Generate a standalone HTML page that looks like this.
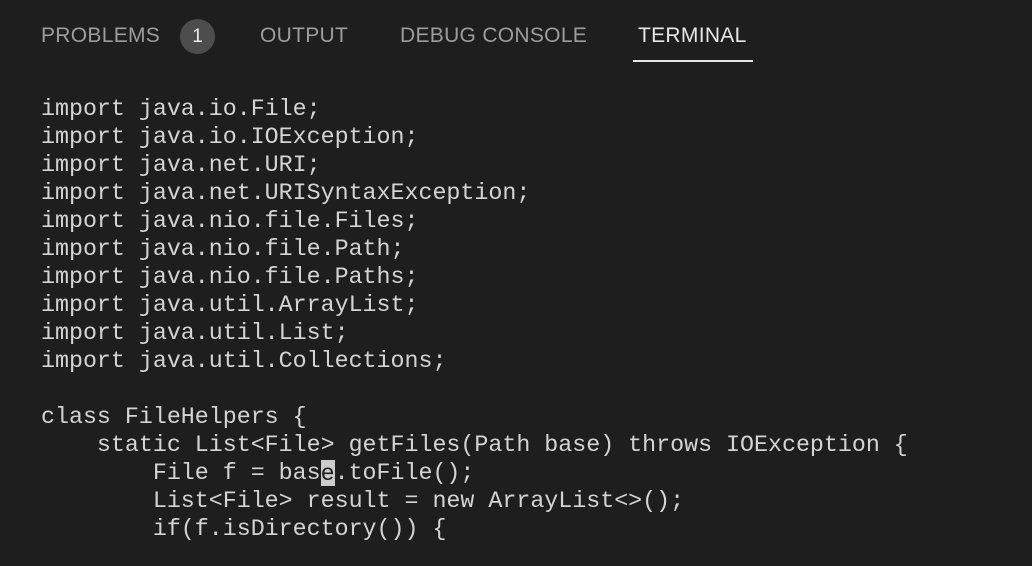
<!DOCTYPE html>
<html><head><style>
body{margin:0;width:1032px;height:566px;background:#1e1e1e;overflow:hidden;position:relative;font-family:"Liberation Sans",sans-serif}
.tab{position:absolute;top:22px;font-size:21px;color:#9d9d9d;line-height:28px;letter-spacing:0.3px}
.badge{position:absolute;left:180px;top:19px;width:35px;height:35px;border-radius:50%;background:#4d4d4d;color:#eee;font-size:19px;text-align:center;line-height:35px}
.ul{position:absolute;left:633px;top:60px;width:120px;height:2px;background:#e7e7e7}
pre{position:absolute;left:41px;top:95px;margin:0;font-family:"Liberation Mono",monospace;font-size:23.3px;line-height:28px;color:#d4d4d4}
.cur{background:#cccccc;color:#1e1e1e;display:inline-block;height:26px;line-height:28px;vertical-align:top;margin-top:1px}
</style></head><body>
<div class="tab" style="left:41px">PROBLEMS</div>
<div class="badge">1</div>
<div class="tab" style="left:260px">OUTPUT</div>
<div class="tab" style="left:400px">DEBUG CONSOLE</div>
<div class="tab" style="left:638px;color:#e7e7e7">TERMINAL</div>
<div class="ul"></div>
<pre>import java.io.File;
import java.io.IOException;
import java.net.URI;
import java.net.URISyntaxException;
import java.nio.file.Files;
import java.nio.file.Path;
import java.nio.file.Paths;
import java.util.ArrayList;
import java.util.List;
import java.util.Collections;

class FileHelpers {
    static List&lt;File&gt; getFiles(Path base) throws IOException {
        File f = bas<span class="cur">e</span>.toFile();
        List&lt;File&gt; result = new ArrayList&lt;&gt;();
        if(f.isDirectory()) {</pre>
</body></html>
